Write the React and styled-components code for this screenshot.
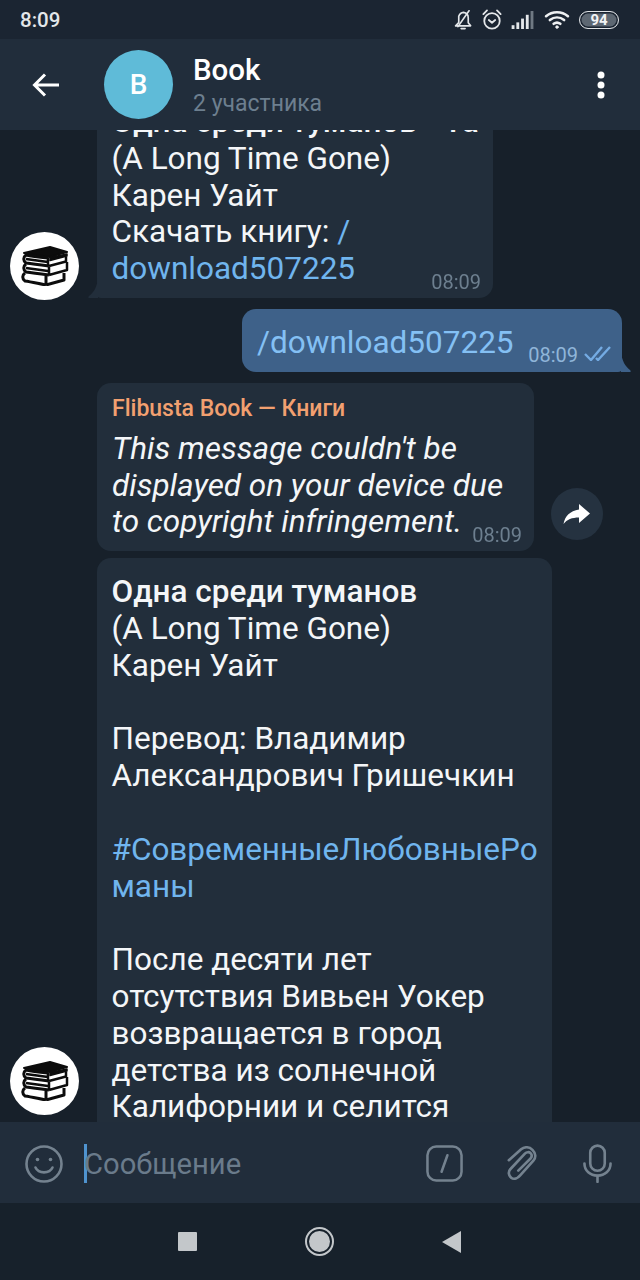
import React from 'react';
import styled, { createGlobalStyle } from 'styled-components';

const GlobalStyle = createGlobalStyle`
	html, body {
		margin: 0;
		padding: 0;
		background: #17212b;
	}

	body {
		font-family: Roboto, "Liberation Sans", sans-serif;
	}
`;

const colors = {
	status: '#1b2532',
	panel: '#212d3b',
	chat: '#17202a',
	bubble: '#222e3b',
	out: '#3e6189',
	link: '#70b5ee',
	time: '#6d7f8f',
	icon: '#74828f',
};

const Screen = styled.div`
	display: flex;
	flex-direction: column;
	width: 640px;
	height: 1280px;
	overflow: hidden;
	background: ${colors.chat};
`;

const StatusBar = styled.div`
	display: flex;
	align-items: center;
	justify-content: space-between;
	flex: 0 0 39px;
	padding: 0 21px 0 20px;
	background: ${colors.status};
	color: #e4e7ea;
`;

const Clock = styled.span`
	font-size: 20.5px;
	font-weight: 500;
`;

const StatusIcons = styled.div`
	display: flex;
	align-items: center;
	gap: 9px;
`;

const Battery = styled.div`
	display: flex;
	align-items: center;
	justify-content: center;
	box-sizing: border-box;
	width: 40px;
	height: 18px;
	border: 1.5px solid #dfe2e5;
	border-radius: 9px;
	box-shadow: inset 0 0 0 1.5px ${colors.status};
	background: #5d6772;
	color: #f2f3f4;
	font-size: 15px;
	font-weight: 700;
`;

const Header = styled.header`
	display: flex;
	align-items: center;
	flex: 0 0 91px;
	padding: 0 35px 0 32px;
	background: ${colors.panel};
`;

const BackButton = styled.div`
	display: flex;
	width: 27px;
	margin-right: 45px;
`;

const ChatAvatar = styled.div`
	display: flex;
	align-items: center;
	justify-content: center;
	width: 69px;
	height: 69px;
	margin-right: 20px;
	border-radius: 50%;
	background: #5fbbd8;
	color: #fff;
	font-size: 28px;
	font-weight: 500;
`;

const HeaderText = styled.div`
	display: flex;
	flex: 1;
	flex-direction: column;
	gap: 2px;
`;

const Title = styled.div`
	color: #fff;
	font-size: 29.5px;
	font-weight: 500;
	line-height: 36px;
`;

const Subtitle = styled.div`
	color: ${colors.time};
	font-size: 23px;
	line-height: 27px;
`;

const Chat = styled.main`
	display: flex;
	flex: 1;
	flex-direction: column;
	min-height: 0;
	overflow: hidden;
`;

const Row = styled.div`
	display: flex;
	flex-shrink: 0;
	align-items: flex-end;
	justify-content: ${props => (props.$out ? 'flex-end' : 'flex-start')};
	margin-top: ${props => props.$top}px;
	padding: ${props => (props.$out ? '0 18px 0 0' : '0 0 0 97px')};
`;

const Sender = styled.div`
	position: sticky;
	bottom: 7px;
	flex: none;
	display: flex;
	align-items: center;
	justify-content: center;
	width: 69px;
	height: 68px;
	margin: 0 18px -2px -87px;
	border-radius: 50%;
	background: #fff;
`;

const Bubble = styled.div`
	position: relative;
	box-sizing: border-box;
	width: ${props => props.$width}px;
	padding: ${props => props.$padding};
	border-radius: ${props => props.$radius || '14px'};
	background: ${props => (props.$out ? colors.out : colors.bubble)};
	color: #f4f6f8;
	font-size: 31.5px;
	line-height: 36.8px;
`;

const Strong = styled.div`
	font-weight: 500;
`;

const Line = styled.div`
	min-height: 36.8px;
	white-space: nowrap;
`;

const Link = styled.span`
	color: ${props => (props.$out ? '#84c0f4' : colors.link)};
`;

const Time = styled.span`
	position: absolute;
	right: ${props => props.$right}px;
	bottom: ${props => props.$bottom}px;
	color: ${props => (props.$out ? '#8fb5d9' : colors.time)};
	font-size: 20px;
	line-height: 22px;
`;

const Tail = styled.svg`
	position: absolute;
	bottom: 0;
	${props => (props.$out ? 'right: -9px;' : 'left: -9px;')}
	width: 10px;
	height: 20px;
	fill: ${props => (props.$out ? colors.out : colors.bubble)};
`;

const Checks = styled.svg`
	position: absolute;
	right: 11px;
	bottom: 11px;
	width: 27px;
	height: 17px;
	fill: none;
	stroke: #74abe3;
	stroke-width: 2.4;
`;

const Forwarded = styled.div`
	margin: 0 0 9px;
	color: #f2a070;
	font-size: 23px;
	font-weight: 500;
	line-height: 26px;
`;

const Italic = styled.div`
	font-style: italic;
	white-space: nowrap;
`;

const ShareButton = styled.div`
	display: flex;
	align-items: center;
	justify-content: center;
	width: 52px;
	height: 52px;
	margin: 0 0 11px 17px;
	border-radius: 50%;
	background: #253240;
`;

const InputBar = styled.footer`
	display: flex;
	align-items: center;
	flex: 0 0 81px;
	box-sizing: border-box;
	padding: 2px 28px 0 25px;
	background: ${colors.panel};
`;

const Caret = styled.div`
	width: 3px;
	height: 39px;
	margin: 0 -3px 0 21px;
	background: #4f93cf;
`;

const Placeholder = styled.div`
	flex: 1;
	color: #6a7b8b;
	font-size: 29.2px;
	white-space: nowrap;
`;

const InputIcons = styled.div`
	display: flex;
	align-items: center;
	gap: 43px;
`;

const NavBar = styled.nav`
	display: flex;
	align-items: center;
	justify-content: space-between;
	flex: 0 0 77px;
	padding: 0 179px 0 178px;
	background: #17212b;
`;

const NavSquare = styled.div`
	width: 19px;
	height: 19px;
	border-radius: 1px;
	background: #c3c7ca;
`;

const NavHome = styled.div`
	box-sizing: border-box;
	width: 29px;
	height: 29px;
	border: 2px solid #c3c7ca;
	border-radius: 50%;
	padding: 2px;
	background: #c3c7ca content-box;
`;

const NavBack = styled.div`
	width: 0;
	height: 0;
	border-top: 11px solid transparent;
	border-bottom: 11px solid transparent;
	border-right: 19px solid #c3c7ca;
`;

function BellOffIcon() {
	return (
		<svg width="19" height="21" viewBox="0 0 24 26" fill="none" stroke="#e4e7ea" strokeWidth="2.1" strokeLinejoin="round" strokeLinecap="round">
			<path d="M2 21h19l-3-4v-6c0-4-2.500-6.500-6-7-3 .2-5 2-6 5v8z" />
			<path d="M9 24.500h5" />
			<path d="M19 2 5 22" />
		</svg>
	);
}

function AlarmIcon() {
	return (
		<svg width="20" height="24" viewBox="0 0 22 26" fill="none" stroke="#e4e7ea" strokeWidth="2" strokeLinecap="round" strokeLinejoin="round">
			<circle cx="11" cy="14" r="8.500" />
			<path d="m7.500 13 3.500 3 3.500-3" />
			<path d="M1.500 6.500 5.500 2.500" />
			<path d="M20.500 6.500 16.500 2.500" />
		</svg>
	);
}

function SignalIcon() {
	return (
		<svg width="24" height="18" viewBox="0 0 24 19">
			<rect x="0" y="15" width="3" height="4" fill="#e4e7ea" />
			<rect x="5" y="12" width="3" height="7" fill="#e4e7ea" />
			<rect x="10" y="8" width="3" height="11" fill="#e4e7ea" />
			<rect x="15" y="4" width="3" height="15" fill="#e4e7ea" />
			<rect x="20" y="0" width="3" height="19" fill="#6f7983" />
		</svg>
	);
}

function WifiIcon() {
	return (
		<svg width="26" height="19" viewBox="0 0 26 20" fill="none" stroke="#eef0f2" strokeWidth="2.8" strokeLinecap="round">
			<path d="M1.500 6.500c6.500-5.500 16.500-5.500 23 0" />
			<path d="M5.500 10.500c4.500-3.500 10.500-3.500 15 0" />
			<path d="M9.500 14.500c2-1.500 5-1.500 7 0" />
			<circle cx="13" cy="18" r="1.300" fill="#eef0f2" strokeWidth="1" />
		</svg>
	);
}

function BooksIcon() {
	return (
		<svg width="48" height="40" viewBox="0 0 48 40" fill="none" stroke="#0c0c0c" strokeLinejoin="round">
			<path d="M3 7 29 1l17 5-18 5z" fill="#0c0c0c" strokeWidth="2" />
			<path d="M29 11.500 46 8v2l-17 4.500z" fill="#0c0c0c" strokeWidth="1.5" />
			<path d="M27 12C18 11 10 10 5 9c-3 2-3 6 0 8 7 1 15 2 23 3" strokeWidth="3" />
			<path d="M5 13c7 1 15 2 22 3M27 12v8M28 20l17-4.500V11" strokeWidth="2.5" />
			<path d="M5 18c-3 2-3 6 0 8 7 1 15 2 23 3" strokeWidth="3" />
			<path d="M5 22c7 1 15 2 22 3M28 21v8M28 29l18-5v-8" strokeWidth="2.5" />
			<path d="M4 27c-3 2-3 6 0 8 7 1 15 3 21 4M25 30v9M25 39l18-5v-7" strokeWidth="3" />
		</svg>
	);
}

function Smile() {
	return (
		<svg width="38" height="38" viewBox="0 0 38 38" fill="none" stroke={colors.icon} strokeWidth="2.6" strokeLinecap="round">
			<circle cx="19" cy="19" r="17.500" />
			<path d="M10.500 22.500c3 6.500 14 6.500 17 0" />
			<circle cx="12.500" cy="14.500" r="1.800" fill={colors.icon} stroke="none" />
			<circle cx="25.500" cy="14.500" r="1.800" fill={colors.icon} stroke="none" />
		</svg>
	);
}

function CommandIcon() {
	return (
		<svg width="37" height="37" viewBox="0 0 38 38" fill="none" stroke={colors.icon} strokeWidth="2.6" strokeLinecap="round">
			<rect x="1.500" y="1.500" width="35" height="35" rx="9" />
			<path d="m22 10.500-6 17" />
		</svg>
	);
}

function PaperclipIcon() {
	return (
		<svg width="34" height="36" viewBox="0 0 36 38" fill="none" stroke={colors.icon} strokeWidth="2.8" strokeLinecap="round" strokeLinejoin="round">
			<path d="M3 15 16 3.500c3.500-3 8.500-3 12 .5s4 8 1 11.500L15 31c-2.500 3-6.500 5-9.500 2.500S2 27 5 24l15-16c1.800-1.800 4.500-2 6-.5s1.500 4-.3 6L13 26" />
		</svg>
	);
}

function MicIcon() {
	return (
		<svg width="29" height="39" viewBox="0 0 30 40" fill="none" stroke={colors.icon} strokeWidth="2.7" strokeLinecap="round">
			<rect x="7.500" y="1.500" width="15" height="26" rx="7.500" />
			<path d="M1.500 20c0 7.500 6 12.500 13.500 12.500S28.500 27.500 28.500 20" />
			<path d="M15 33v6" />
		</svg>
	);
}

export default function App() {
	return (
		<Screen>
			<GlobalStyle />

			<StatusBar>
				<Clock>8:09</Clock>
				<StatusIcons>
					<BellOffIcon />
					<AlarmIcon />
					<SignalIcon />
					<WifiIcon />
					<Battery>94</Battery>
				</StatusIcons>
			</StatusBar>

			<Header>
				<BackButton>
					<svg width="27" height="24" viewBox="0 0 27 24" fill="none" stroke="#fff" strokeWidth="3">
						<path d="M27 12H3M13 1.500 2.500 12 13 22.500" />
					</svg>
				</BackButton>
				<ChatAvatar>B</ChatAvatar>
				<HeaderText>
					<Title>Book</Title>
					<Subtitle>2 участника</Subtitle>
				</HeaderText>
				<svg width="8" height="28" viewBox="0 0 8 28" fill="#fff">
					<circle cx="4" cy="4" r="3.500" />
					<circle cx="4" cy="14" r="3.500" />
					<circle cx="4" cy="24" r="3.500" />
				</svg>
			</Header>

			<Chat>
				<Row $top={-42}>
					<Sender>
						<BooksIcon />
					</Sender>
					<Bubble $width={396} $padding="16px 16px 10px 14.5px" $radius="0 0 14px 4px">
						<Strong><Line>Одна среди туманов - Ya</Line></Strong>
						<Line>(A Long Time Gone)</Line>
						<Line>Карен Уайт</Line>
						<Line>Скачать книгу: <Link>/</Link></Line>
						<Line><Link>download507225</Link></Line>
						<Time $right={12} $bottom={5}>08:09</Time>
						<Tail viewBox="0 0 10 20"><path d="M10 0v20H1c-1 0-1-1 0-2 5-4 8-9 9-18z" /></Tail>
					</Bubble>
				</Row>

				<Row $out $top={11}>
					<Bubble $out $width={380} $padding="16px 16px 10px 15px" $radius="14px 14px 4px 14px">
						<Line><Link $out>/download507225</Link></Line>
						<Time $out $right={44} $bottom={6}>08:09</Time>
						<Checks viewBox="0 0 27 17">
							<path d="m1 10 6 6L18 3" />
							<path d="m12 14 2 2L26 3" />
						</Checks>
						<Tail $out viewBox="0 0 10 20"><path d="M0 0v20H9c1 0 1-1 0-2C4 14 1 9 0 0z" /></Tail>
					</Bubble>
				</Row>

				<Row $top={11}>
					<Bubble $width={437} $padding="13px 10px 10px 15px">
						<Forwarded>Flibusta Book — Книги</Forwarded>
						<Italic>This message couldn't be</Italic>
						<Italic>displayed on your device due</Italic>
						<Italic>to copyright infringement.</Italic>
						<Time $right={12} $bottom={5}>08:09</Time>
					</Bubble>
					<ShareButton>
						<svg width="28" height="22" viewBox="0 0 28 22" fill="#fff">
							<path d="M16 1v5.500C7 8 2 13 .5 21 4 16.500 9 14.500 16 14.500V20l11-9.500z" />
						</svg>
					</ShareButton>
				</Row>

				<Row $top={7}>
					<Sender>
						<BooksIcon />
					</Sender>
					<Bubble $width={455} $padding="16px 16px 60px 14.5px">
						<Strong><Line>Одна среди туманов</Line></Strong>
						<Line>(A Long Time Gone)</Line>
						<Line>Карен Уайт</Line>
						<Line />
						<Line>Перевод: Владимир</Line>
						<Line>Александрович Гришечкин</Line>
						<Line />
						<Line><Link>#СовременныеЛюбовныеРо</Link></Line>
						<Line><Link>маны</Link></Line>
						<Line />
						<Line>После десяти лет</Line>
						<Line>отсутствия Вивьен Уокер</Line>
						<Line>возвращается в город</Line>
						<Line>детства из солнечной</Line>
						<Line>Калифорнии и селится</Line>
					</Bubble>
				</Row>
			</Chat>

			<InputBar>
				<Smile />
				<Caret />
				<Placeholder>Сообщение</Placeholder>
				<InputIcons>
					<CommandIcon />
					<PaperclipIcon />
					<MicIcon />
				</InputIcons>
			</InputBar>

			<NavBar>
				<NavSquare />
				<NavHome />
				<NavBack />
			</NavBar>
		</Screen>
	);
}
